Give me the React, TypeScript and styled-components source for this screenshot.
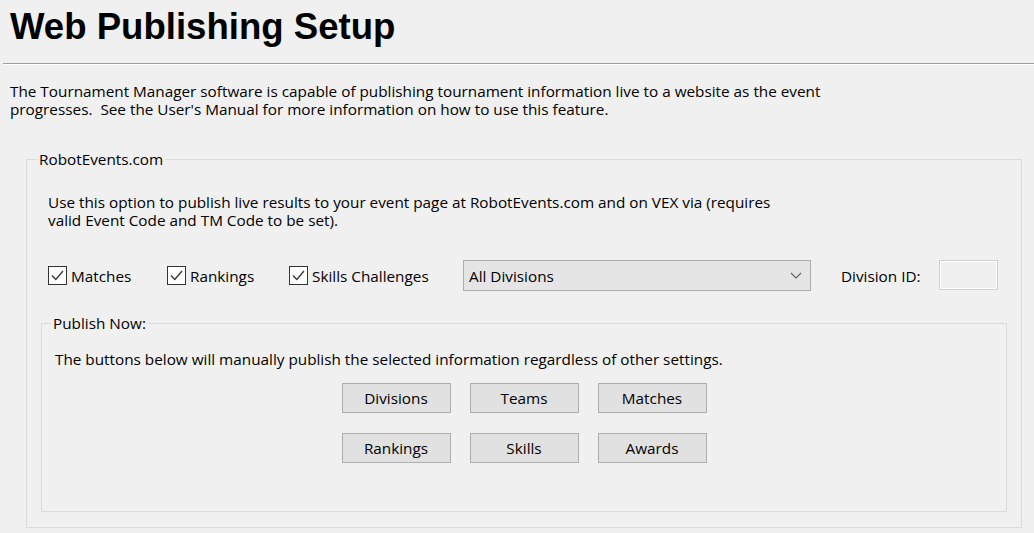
import React from "react";
import styled, { createGlobalStyle } from "styled-components";

const GlobalStyle = createGlobalStyle`
	html, body {
		margin: 0;
		padding: 0;
		background: #f0f0f0;
	}
	body {
		font-family: "Open Sans", "Noto Sans", sans-serif;
		font-size: 15.3px;
		line-height: 18px;
		color: #000;
	}
`;

const Page = styled.div`
	width: 1034px;
	height: 533px;
	overflow: hidden;
	background: #f0f0f0;
`;

const Header = styled.div`
	padding: 9px 0 0 10px;
	height: 63px;
	box-sizing: border-box;
	h1 {
		margin: 0;
		font-family: "Liberation Sans", Arial, sans-serif;
		font-weight: bold;
		font-size: 36.6px;
		line-height: 36px;
	}
`;

const Separator = styled.div`
	margin: 0 0 0 3px;
	border-top: 1px solid #a0a0a0;
	border-bottom: 1px solid #ffffff;
`;

const Intro = styled.p`
	margin: 17px 0 0 10px;
	white-space: nowrap;
`;

const GroupBox = styled.fieldset<{ $left: number; $width: number; $top: number; $legendOffset: number }>`
	margin: ${({ $top }) => $top}px 0 0 ${({ $left }) => $left}px;
	padding: 0;
	width: ${({ $width }) => $width}px;
	box-sizing: border-box;
	border: 1px solid #dcdcdc;
	min-inline-size: 0;

	legend {
		margin-left: ${({ $legendOffset }) => $legendOffset}px;
		padding: 0 2px;
		line-height: 18px;
	}
`;

const OuterBody = styled.div`
	padding: 25px 14px 15px 14px;
`;

const Description = styled.p`
	margin: 0 0 0 7px;
	white-space: nowrap;
`;

const OptionsRow = styled.div`
	display: flex;
	align-items: center;
	height: 31px;
	margin: 31px 0 0 7px;
`;

const CheckItem = styled.label<{ $width: number }>`
	display: flex;
	align-items: center;
	gap: 4px;
	width: ${({ $width }) => $width}px;
	flex: none;
`;

const CheckBox = styled.span`
	width: 19px;
	height: 19px;
	box-sizing: border-box;
	border: 1px solid #333;
	background: #fff;
	display: flex;
	align-items: center;
	justify-content: center;
	flex: none;
`;

const Dropdown = styled.div`
	width: 348px;
	height: 31px;
	box-sizing: border-box;
	border: 1px solid #adadad;
	background: #e5e5e5;
	display: flex;
	align-items: center;
	justify-content: space-between;
	padding: 0 8px 0 5px;
	flex: none;
`;

const FieldLabel = styled.span`
	margin-left: 30px;
	width: 98px;
	flex: none;
`;

const DisabledInput = styled.div`
	width: 59px;
	height: 30px;
	box-sizing: border-box;
	border: 1px solid #d0d0d0;
	box-shadow: inset 0 0 0 1px #fff;
	background: #f0f0f0;
	margin-top: -1px;
`;

const InnerBody = styled.div`
	padding: 18px 0 48px 0;
`;

const InnerText = styled.p`
	margin: 0 0 0 13px;
`;

const ButtonGrid = styled.div`
	display: grid;
	grid-template-columns: repeat(3, 109px);
	grid-auto-rows: 30px;
	column-gap: 19px;
	row-gap: 20px;
	justify-content: center;
	margin-top: 15px;
`;

const Button = styled.button`
	font-family: "Open Sans", "Noto Sans", sans-serif;
	font-size: 15.3px;
	color: #000;
	background: #e1e1e1;
	border: 1px solid #adadad;
	border-radius: 0;
	padding: 0;
	margin: 0;
	line-height: 18px;
`;

const Check = () => (
	<svg width="15" height="15" viewBox="0 0 15 15">
		<path d="M2 7.5 L5.8 11.5 L13 3" fill="none" stroke="#333" strokeWidth="1.3" />
	</svg>
);

const Chevron = () => (
	<svg width="12" height="7" viewBox="0 0 12 7">
		<path d="M1 1 L6 6 L11 1" fill="none" stroke="#606060" strokeWidth="1.1" />
	</svg>
);

const checks = [
	{ label: "Matches", width: 119 },
	{ label: "Rankings", width: 122 },
	{ label: "Skills Challenges", width: 174 },
];

const buttons = ["Divisions", "Teams", "Matches", "Rankings", "Skills", "Awards"];

const App: React.FC = () => {
	return (
		<Page>
			<GlobalStyle />
			<Header>
				<h1>Web Publishing Setup</h1>
			</Header>
			<Separator />
			<Intro>
				The Tournament Manager software is capable of publishing tournament information live to a website as the event
				<br />
				progresses.&nbsp; See the User's Manual for more information on how to use this feature.
			</Intro>

			<GroupBox $left={26} $width={996} $top={32} $legendOffset={10}>
				<legend>RobotEvents.com</legend>
				<OuterBody>
					<Description>
						Use this option to publish live results to your event page at RobotEvents.com and on VEX via (requires
						<br />
						valid Event Code and TM Code to be set).
					</Description>

					<OptionsRow>
						{checks.map((c) => (
							<CheckItem key={c.label} $width={c.width}>
								<CheckBox>
									<Check />
								</CheckBox>
								{c.label}
							</CheckItem>
						))}
						<Dropdown>
							<span>All Divisions</span>
							<Chevron />
						</Dropdown>
						<FieldLabel>Division ID:</FieldLabel>
						<DisabledInput />
					</OptionsRow>

					<GroupBox $left={0} $width={966} $top={23} $legendOffset={9}>
						<legend>Publish Now:</legend>
						<InnerBody>
							<InnerText>The buttons below will manually publish the selected information regardless of other settings.</InnerText>
							<ButtonGrid>
								{buttons.map((b) => (
									<Button key={b}>{b}</Button>
								))}
							</ButtonGrid>
						</InnerBody>
					</GroupBox>
				</OuterBody>
			</GroupBox>
		</Page>
	);
};

export default App;
